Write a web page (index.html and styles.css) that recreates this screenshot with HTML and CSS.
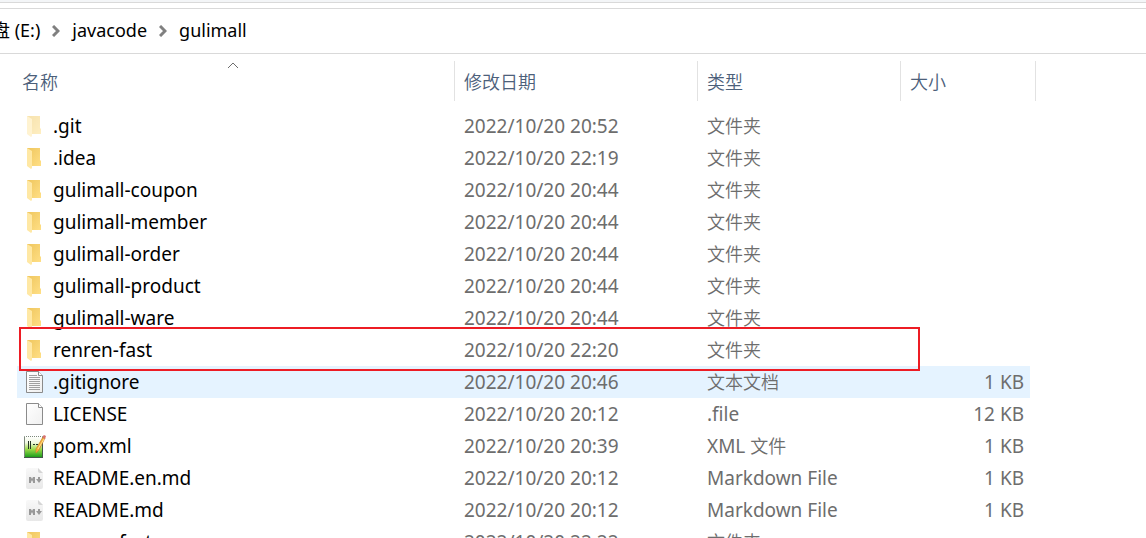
FILE: index.html
```
<!DOCTYPE html>
<html lang="zh-CN">
<head>
  <meta charset="UTF-8" />
  <meta name="viewport" content="width=device-width, initial-scale=1.0" />
  <title>gulimall</title>
  <link rel="stylesheet" href="styles.css">
</head>
<body>
  <svg class="sprite" aria-hidden="true">
    <defs>
      <linearGradient id="folder-back" x1="0" y1="0" x2="1" y2="1"><stop offset="0" stop-color="#efc65e"/><stop offset="1" stop-color="#ffdf85"/></linearGradient>
      <linearGradient id="page-fill" x1="0" y1="0" x2="1" y2="1"><stop offset="0" stop-color="#fff"/><stop offset="1" stop-color="#f0f0f0"/></linearGradient>
      <linearGradient id="md-fill" x1="0" y1="0" x2="0" y2="1"><stop offset="0" stop-color="#f8f8f8"/><stop offset="1" stop-color="#e8e8e8"/></linearGradient>
      <linearGradient id="xml-fill" x1="0" y1="0" x2="0" y2="1"><stop offset="0" stop-color="#fff"/><stop offset=".3" stop-color="#f0f8e0"/><stop offset=".6" stop-color="#9fdc4c"/><stop offset="1" stop-color="#159a18"/></linearGradient>
    </defs>
    <symbol id="folder" viewBox="0 0 24 24">
      <path d="M3 2h13v12l1 1v5H3z" fill="url(#folder-back)"/>
      <path d="M3 2l5 3v17l-1 1-4-3z" fill="#ffe8a4"/>
    </symbol>
    <symbol id="text" viewBox="0 0 24 24">
      <path d="M2.500 1.500h12l4 4v17h-16z" fill="url(#page-fill)" stroke="#8b8b8b"/>
      <path d="M14.500 1.500v4h4" fill="#fff" stroke="#8b8b8b"/>
      <path d="M5 5.500h8M5 7.500h11M5 9.500h11M5 11.500h11M5 13.500h11M5 15.500h11M5 17.500h11M5 19.500h11" stroke="#a0a0a0"/>
    </symbol>
    <symbol id="blank" viewBox="0 0 24 24">
      <path d="M2.500 1.500h12l4 4v17h-16z" fill="url(#page-fill)" stroke="#8b8b8b"/>
      <path d="M14.500 1.500v4h4" fill="#fff" stroke="#8b8b8b"/>
    </symbol>
    <symbol id="xml" viewBox="0 0 24 24">
      <path d="M.5 2.500h18v21H.5z" fill="url(#xml-fill)" stroke="#7d897b"/>
      <path d="M1 2.500h17" stroke="#fff" stroke-dasharray="1 1"/>
      <path d="M0 23.500h19M18.500 9v14" stroke="#45564a"/>
      <path d="M4.500 7v8M6.500 7v8" stroke="#263526"/>
      <path d="M9 10.500h2M12 10.500h2" stroke="#263526"/>
      <path d="M19 3l2 1-6 12-3 3v-4z" fill="#f4b13c" stroke="#cf7e2c" stroke-width=".7"/>
      <path d="M19 2l1-1 2 1-1 3-2-1z" fill="#d77370"/>
      <path d="M20 5l-6 10" stroke="#ffe18a"/>
    </symbol>
    <symbol id="markdown" viewBox="0 0 24 24">
      <path d="M4 2h10l5 5v14q0 2-2 2H4q-2 0-2-2V4q0-2 2-2z" fill="url(#md-fill)"/>
      <path d="M14 2v3q0 2 2 2h3z" fill="#d5d5d5"/>
      <path d="M5 17v-6h2l1 2 1-2h2v6H9v-3l-1 2-1-2v3zM14 11h2v2h2l-3 4-3-4h2z" fill="#999"/>
    </symbol>
  </svg>

  <div class="toolbar-edge"></div>
  <nav class="address" aria-label="路径">
    <a href="#">盘 (E:)</a>
    <svg class="chevron" viewBox="0 0 8 12"><path d="M1 1l5 5-5 5"/></svg>
    <a href="#">javacode</a>
    <svg class="chevron" viewBox="0 0 8 12"><path d="M1 1l5 5-5 5"/></svg>
    <a href="#">gulimall</a>
  </nav>

  <main>
    <table class="files">
      <colgroup><col class="col-name"><col class="col-date"><col class="col-type"><col class="col-size"></colgroup>
      <thead>
        <tr>
          <th>名称<svg class="sort" viewBox="0 0 12 7"><path d="M1 6l5-5 5 5"/></svg></th>
          <th>修改日期</th>
          <th>类型</th>
          <th>大小</th>
        </tr>
      </thead>
      <tbody id="rows"></tbody>
    </table>
  </main>

  <script>
    const files = [
      { name: '.git', date: '2022/10/20 20:52', type: '文件夹', icon: 'folder', state: 'hidden-file' },
      { name: '.idea', date: '2022/10/20 22:19', type: '文件夹', icon: 'folder' },
      { name: 'gulimall-coupon', date: '2022/10/20 20:44', type: '文件夹', icon: 'folder' },
      { name: 'gulimall-member', date: '2022/10/20 20:44', type: '文件夹', icon: 'folder' },
      { name: 'gulimall-order', date: '2022/10/20 20:44', type: '文件夹', icon: 'folder' },
      { name: 'gulimall-product', date: '2022/10/20 20:44', type: '文件夹', icon: 'folder' },
      { name: 'gulimall-ware', date: '2022/10/20 20:44', type: '文件夹', icon: 'folder' },
      { name: 'renren-fast', date: '2022/10/20 22:20', type: '文件夹', icon: 'folder', state: 'marked' },
      { name: '.gitignore', date: '2022/10/20 20:46', type: '文本文档', size: '1 KB', icon: 'text', state: 'hover' },
      { name: 'LICENSE', date: '2022/10/20 20:12', type: '.file', size: '12 KB', icon: 'blank' },
      { name: 'pom.xml', date: '2022/10/20 20:39', type: 'XML 文件', size: '1 KB', icon: 'xml' },
      { name: 'README.en.md', date: '2022/10/20 20:12', type: 'Markdown File', size: '1 KB', icon: 'markdown' },
      { name: 'README.md', date: '2022/10/20 20:12', type: 'Markdown File', size: '1 KB', icon: 'markdown' },
      { name: 'renren-fast', date: '2022/10/20 22:22', type: '文件夹', icon: 'folder' }
    ];

    document.getElementById('rows').innerHTML = files.map(f => `
      <tr class="${f.state || ''}">
        <td><div class="name"><svg class="icon"><use href="#${f.icon}"/></svg>${f.name}</div></td>
        <td>${f.date}</td>
        <td>${f.type.replace(/[\u4e00-\u9fff]+/g, '<span class="han">$&</span>')}</td>
        <td>${f.size || ''}</td>
      </tr>`).join('');
  </script>
</body>
</html>
```
FILE: styles.css
```
*, *::before, *::after { box-sizing: border-box; }
html { height: 100%; overflow: hidden; }
body { margin: 0; height: 100%; overflow: hidden; background: #fff; color: #000; font: 19px/32px "Noto Sans", "Noto Sans CJK SC", sans-serif; }
.sprite { position: absolute; width: 0; height: 0; }

.toolbar-edge { height: 3px; background: #f3f5f7; border-bottom: 1px solid #d9d9d9; }
.address { display: flex; align-items: center; height: 46px; margin-top: 5px; padding-bottom: 2px; border-top: 1px solid #d9d9d9; border-bottom: 1px solid #d9d9d9; font-size: 18px; white-space: nowrap; }
.address a { color: #000; text-decoration: none; }
.address a:first-child { margin-left: -8px; }
.chevron { width: 8px; height: 12px; margin: 2px 12px 0 12px; flex: none; }
.chevron path { fill: none; stroke: #808080; stroke-width: 3; }

.files { table-layout: fixed; width: 1013px; margin-left: 17px; border-collapse: collapse; }
.col-name { width: 438px; }
.col-date { width: 243px; }
.col-type { width: 203px; }
.files th { position: relative; height: 56px; padding: 0 9px 2px; color: #4c607a; font: 350 18px/32px "Noto Sans CJK SC", sans-serif; text-align: left; }
.files th:first-child { padding-left: 5px; }
.files th::after { content: ""; position: absolute; top: 7px; right: 0; width: 1px; height: 40px; background: #e2e2e2; }
.files th:last-child::after { right: -6px; }
.sort { position: absolute; top: 8px; left: 210px; width: 12px; height: 7px; }
.sort path { fill: none; stroke: #6d6d6d; }

.files td { position: relative; height: 32px; padding: 0 9px; color: #6d6d6d; white-space: nowrap; }
.files td:first-child { padding-left: 7px; color: #000; }
.files td:last-child { padding-right: 6px; text-align: right; }
.name { display: flex; align-items: center; gap: 5px; height: 32px; }
.icon { width: 24px; height: 24px; flex: none; }
.han { font-size: 18px; font-weight: 350; }
.hidden-file .icon { opacity: .5; }
.hover td { background: #e5f3ff; }
.marked td:first-child::after { content: ""; position: absolute; z-index: 1; top: -7px; left: 2px; width: 901px; height: 44px; border: 2px solid #ed1c24; }
```
